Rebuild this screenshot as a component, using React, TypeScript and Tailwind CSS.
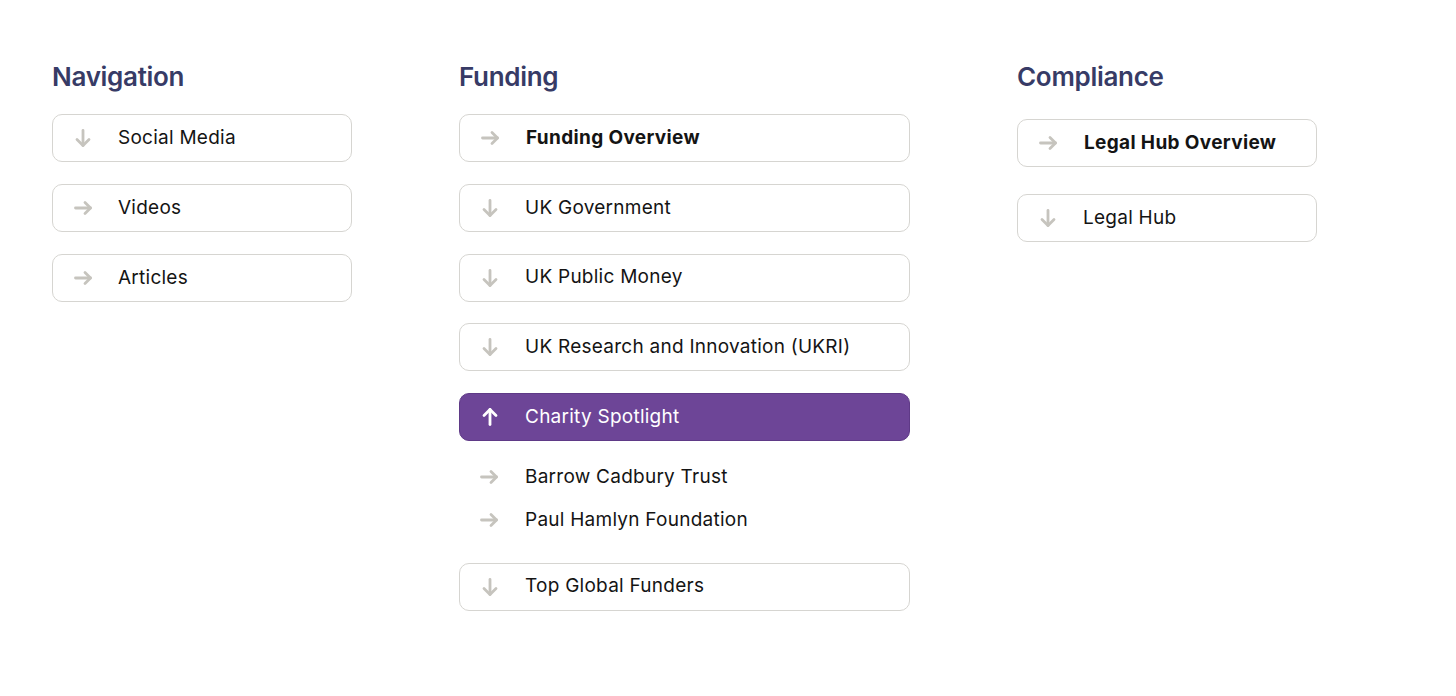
import React from 'react';

type Dir = 'down' | 'right' | 'up';

function Arrow({ dir, light }: { dir: Dir; light?: boolean }) {
  const color = light ? '#ffffff' : '#c6c4be';
  return (
    <svg width="20" height="20" viewBox="0 0 20 20" fill="none" stroke={color} strokeWidth="2.8" strokeLinecap="round" strokeLinejoin="round">
      {dir === 'right' && (
        <>
          <path d="M2.5 10h15" />
          <path d="M12 4.5l5.5 5.5-5.5 5.5" />
        </>
      )}
      {dir === 'down' && (
        <>
          <path d="M10 2.5v15" />
          <path d="M4 11.5l6 6 6-6" />
        </>
      )}
      {dir === 'up' && (
        <>
          <path d="M10 17.5V2.5" />
          <path d="M4 8.5l6-6 6 6" />
        </>
      )}
    </svg>
  );
}

function NavBox({ label, dir, bold, active }: { label: string; dir: Dir; bold?: boolean; active?: boolean }) {
  return (
    <div
      className={
        active
          ? 'flex items-center h-[48px] rounded-[10px] border-[1.5px] border-[#5f3a87] bg-[#6d4597] text-white'
          : 'flex items-center h-[48px] rounded-[10px] border-[1.5px] border-[#d6d5d1] bg-white text-[#141414]'
      }
    >
      <span className="ml-[20px] w-[20px] flex items-center justify-center">
        <Arrow dir={dir} light={active} />
      </span>
      <span
        className={
          bold
            ? 'ml-[26px] text-[19px] font-bold tracking-[0.35px]'
            : 'ml-[25px] text-[19px] tracking-[0.25px]'
        }
      >
        {label}
      </span>
    </div>
  );
}

function SubItem({ label }: { label: string }) {
  return (
    <div className="flex items-center h-[26px] text-[#141414]">
      <span className="ml-[20px] w-[20px] flex items-center justify-center">
        <Arrow dir="right" />
      </span>
      <span className="ml-[26px] text-[19px] tracking-[0.25px]">{label}</span>
    </div>
  );
}

function Heading({ children }: { children: React.ReactNode }) {
  return <h2 className="text-[26px] leading-[32px] font-semibold text-[#373b66] tracking-[-0.3px]">{children}</h2>;
}

export default function App() {
  return (
    <div className="min-h-screen bg-white pl-[52px] pt-[61px]" style={{ fontFamily: 'Inter, "Noto Sans", sans-serif' }}>
      <div className="flex gap-[107px]">
        {/* Navigation */}
        <div className="w-[300px]">
          <Heading>Navigation</Heading>
          <div className="mt-[21px] flex flex-col gap-[22px]">
            <NavBox label="Social Media" dir="down" />
            <NavBox label="Videos" dir="right" />
            <NavBox label="Articles" dir="right" />
          </div>
        </div>

        {/* Funding */}
        <div className="w-[451px]">
          <Heading>Funding</Heading>
          <div className="mt-[21px] flex flex-col gap-[21.75px]">
            <NavBox label="Funding Overview" dir="right" bold />
            <NavBox label="UK Government" dir="down" />
            <NavBox label="UK Public Money" dir="down" />
            <NavBox label="UK Research and Innovation (UKRI)" dir="down" />
            <NavBox label="Charity Spotlight" dir="up" active />
            <div className="flex flex-col gap-[17px] pt-[1px] pb-[8px]">
              <SubItem label="Barrow Cadbury Trust" />
              <SubItem label="Paul Hamlyn Foundation" />
            </div>
            <NavBox label="Top Global Funders" dir="down" />
          </div>
        </div>

        {/* Compliance */}
        <div className="w-[300px]">
          <Heading>Compliance</Heading>
          <div className="mt-[26px] flex flex-col gap-[27px]">
            <NavBox label="Legal Hub Overview" dir="right" bold />
            <NavBox label="Legal Hub" dir="down" />
          </div>
        </div>
      </div>
    </div>
  );
}
